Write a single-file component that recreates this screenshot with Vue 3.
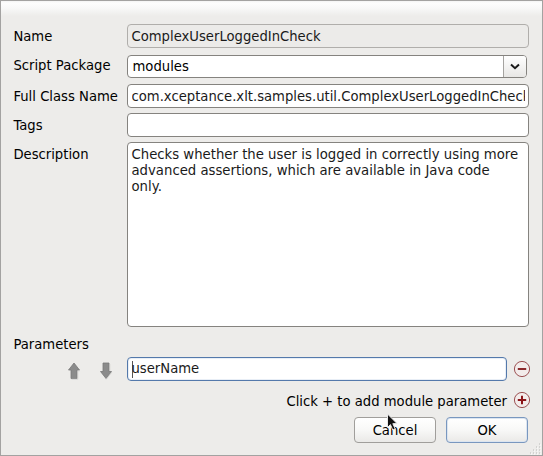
<script setup>
import { ref } from 'vue'

const name = ref('ComplexUserLoggedInCheck')
const scriptPackage = ref('modules')
const className = ref('com.xceptance.xlt.samples.util.ComplexUserLoggedInCheck')
const tags = ref('')
const descriptionLines = [
  'Checks whether the user is logged in correctly using more',
  'advanced assertions, which are available in Java code',
  'only.',
]
const parameter = ref('userName')
</script>

<template>
  <main class="dialog">
    <div class="form">
      <span class="label">Name</span>
      <div class="field readonly">{{ name }}</div>

      <span class="label package-label">Script Package</span>
      <div class="combo">
        <span class="combo-value">{{ scriptPackage }}</span>
        <span class="combo-button">
          <svg width="12" height="8" viewBox="0 0 12 8">
            <path d="M2 1.6 L6 5.2 L10 1.6" fill="none" stroke="#1a1a1a" stroke-width="2" />
          </svg>
        </span>
      </div>

      <span class="label">Full Class Name</span>
      <div class="field"><span class="clip">{{ className }}</span></div>

      <span class="label">Tags</span>
      <div class="field">{{ tags }}</div>

      <span class="label">Description</span>
      <div class="field area">
        <div v-for="line in descriptionLines" :key="line">{{ line }}</div>
      </div>
    </div>

    <div class="parameters-label">Parameters</div>

    <div class="parameter-row">
      <div class="arrows">
        <svg width="14" height="18" viewBox="0 0 14 18">
          <path d="M7 1 L12.5 8 H10 V16.5 H4 V8 H1.5 Z" fill="#8b8b8b" stroke="#797979" stroke-width=".8" />
          <path d="M12.8 8.8 H10.8 V17.2 H4.6" fill="none" stroke="#c5c5c3" stroke-width=".6" />
        </svg>
        <svg width="14" height="18" viewBox="0 0 14 18">
          <path d="M4 1 H10 V9.5 H12.5 L7 16.5 L1.5 9.5 H4 Z" fill="#8b8b8b" stroke="#797979" stroke-width=".8" />
          <path d="M10.8 2 V8.8 M12.8 10.2 L7.2 17.4" fill="none" stroke="#c5c5c3" stroke-width=".6" />
        </svg>
      </div>
      <div class="field focused"><span class="caret"></span>{{ parameter }}</div>
      <svg class="round-icon" width="18" height="18" viewBox="0 0 18 18">
        <circle cx="9" cy="9" r="7.6" fill="#f3eceb" stroke="#9c5153" stroke-width="1" />
        <path d="M4.8 9 H13.2" stroke="#8c2a2d" stroke-width="2" />
      </svg>
    </div>

    <div class="add-row">
      <span class="hint">Click + to add module parameter</span>
      <svg class="round-icon" width="18" height="18" viewBox="0 0 18 18">
        <circle cx="9" cy="9" r="7.6" fill="#f3eceb" stroke="#9c5153" stroke-width="1" />
        <path d="M4.8 9 H13.2 M9 4.8 V13.2" stroke="#8c1519" stroke-width="2" />
      </svg>
    </div>

    <div class="actions">
      <button class="button">Cancel</button>
      <button class="button default">OK</button>
    </div>

    <svg class="pointer" width="14" height="20" viewBox="0 0 14 20">
      <path d="M1.5 1 L1.5 14.5 L4.4 11.6 L6.8 17 L9.2 15.8 L6.8 10.7 L11 10.5 Z" fill="#111" stroke="#e8e8e8" stroke-width="1" />
    </svg>

    <svg class="grip" width="12" height="12" viewBox="0 0 12 12">
      <path d="M9 1h1M6 4h1M9 4h1M3 7h1M6 7h1M9 7h1M0 10h1M3 10h1M6 10h1M9 10h1" stroke="#bab9b7" stroke-width="1.2" />
      <path d="M10 2h1M7 5h1M10 5h1M4 8h1M7 8h1M10 8h1M1 11h1M4 11h1M7 11h1M10 11h1" stroke="#fff" stroke-width="1" />
    </svg>
  </main>
</template>

<style>
body {
  margin: 0;
  overflow: hidden;
}
</style>

<style scoped>
.dialog {
  position: relative;
  box-sizing: border-box;
  width: 543px;
  height: 456px;
  padding: 23px 14px 0 12px;
  border: 1px solid #a3a2a1;
  background: linear-gradient(#f4f4f4, #fdfdfd 2px, #f8f8f8 7px, #edecea 15px);
  color: #000;
  font: 13.2px/16px "DejaVu Sans", sans-serif;
  white-space: pre;
}

.form {
  display: grid;
  grid-template-columns: 114px 402px;
  grid-template-rows: 31px 29px 29px 29px 185px;
}

.label {
  padding: 5px 0 0 0.4px;
}

.package-label {
  padding-top: 3px;
}

.field {
  box-sizing: border-box;
  height: 24px;
  padding: 4px 3px 0 3.5px;
  border: 1px solid #85837f;
  border-radius: 4px;
  background: #fff;
  color: #1a1a1a;
}

.readonly {
  border-color: #b0aeab;
  background: #ecebe9;
}

.clip {
  display: block;
  overflow: hidden;
}

.area {
  height: 185px;
  font-size: 13.26px;
}

.combo {
  box-sizing: border-box;
  display: flex;
  width: 400px;
  height: 23px;
  border: 1px solid #85837f;
  border-radius: 4px;
  overflow: hidden;
  background: #fff;
}

.combo-value {
  flex: 1;
  padding: 3px 0 0 4.5px;
}

.combo-button {
  display: flex;
  align-items: center;
  justify-content: center;
  width: 22px;
  border-left: 1px solid #a5a3a0;
  background: linear-gradient(#fff, #e8e7e5);
}

.parameters-label {
  margin: 10px 0 0 0.4px;
}

.parameter-row {
  display: flex;
  align-items: center;
  height: 24px;
  margin: 4px -4px 0 0;
}

.arrows {
  display: flex;
  flex: none;
  gap: 18px;
  width: 60px;
  padding: 4px 0 0 54px;
}

.focused {
  display: flex;
  flex: none;
  width: 380px;
  padding-top: 3px;
  border-color: #5479ab;
  box-shadow: inset 0 0 0 1px #e8eef6;
}

.caret {
  width: 1px;
  height: 17px;
  margin-right: -1px;
  background: #555;
}

.round-icon {
  flex: none;
  margin-left: 6px;
}

.add-row {
  display: flex;
  justify-content: flex-end;
  align-items: center;
  height: 18px;
  margin: 10px -3px 0 0;
}

.hint {
  padding-top: 3px;
}

.actions {
  display: flex;
  justify-content: flex-end;
  gap: 10px;
  margin-top: 8px;
}

.button {
  box-sizing: border-box;
  width: 82px;
  height: 26px;
  padding: 1px 0 0;
  border: 1px solid #a09e9b;
  border-radius: 4px;
  background: linear-gradient(#fff, #f8f8f7 50%, #eae9e7);
  color: #000;
  font: inherit;
}

.default {
  border-color: #7997bf;
  box-shadow: inset 0 0 0 1px #dce5f0;
}

.pointer {
  position: absolute;
  left: 385px;
  top: 412px;
}

.grip {
  position: absolute;
  right: 0;
  bottom: 0;
}
</style>
